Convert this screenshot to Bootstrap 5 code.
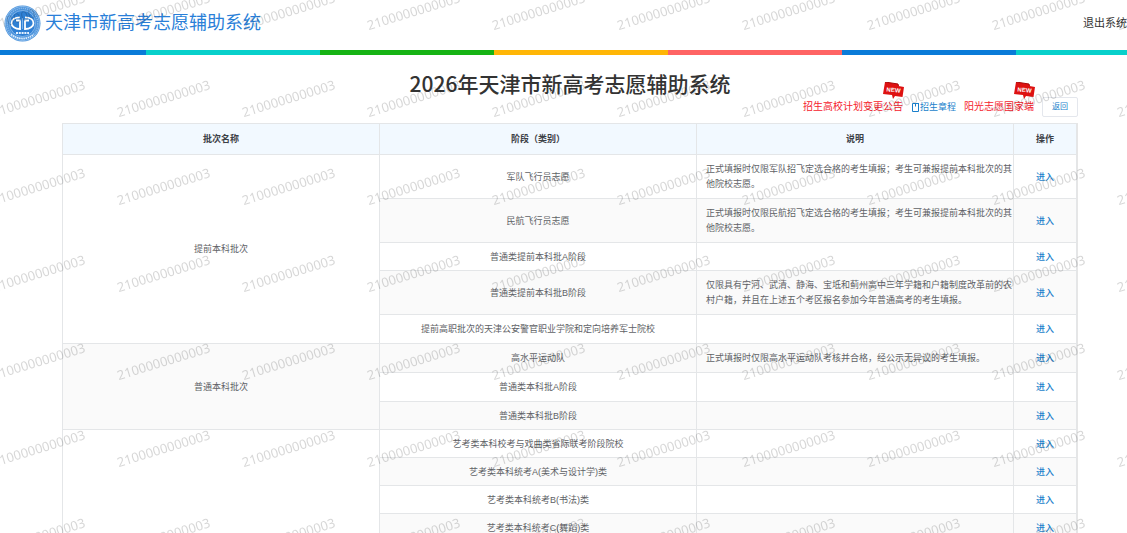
<!DOCTYPE html>
<html lang="zh-CN">
<head>
<meta charset="utf-8">
<meta name="viewport" content="width=device-width, initial-scale=1">
<title>天津市新高考志愿辅助系统</title>
<link href="https://cdn.jsdelivr.net/npm/bootstrap@5.3.0/dist/css/bootstrap.min.css" rel="stylesheet">
<style>
  body { font-family: "Liberation Sans", "Noto Sans CJK SC", sans-serif; font-size: 9px; line-height: 14px; color: #606266; background: #fff; }
  a { text-decoration: none; }
  .site-head { height: 50px; padding: 0 0 4px 4px; }
  .site-name { font-size: 18px; line-height: 24px; color: #2a7fd8; }
  .logout { font-size: 11px; color: #333; }
  .stripe { height: 5px; background: repeating-linear-gradient(90deg, #0a7bd8 0 174px, #08d0cb 174px 348px, #16b314 348px 522px, #ffb606 522px 696px, #ff6464 696px 870px) -28px 0 / 870px 5px repeat-x; }
  .content { padding: 14px 49px 0 62px; }
  .page-title { font: 500 21px/28px "Noto Sans CJK SC", sans-serif; color: #333; }
  .tools { gap: 8px; height: 20px; }
  .notice { font-size: 10px; color: #f5222d; }
  .new-flag { right: -2px; top: -18px; width: 22px; height: 18px; }
  .rules, .enter { color: #1a7fcb; }
  .enter { font-weight: 500; }
  .back { width: 36px; height: 20px; font-size: 8px; line-height: 16px; color: #1a7fcb; background: #fff; border: 1px solid #e4e7ed; border-radius: 2px; }
  .plan-wrap { margin-top: 6px; border-right: 1px solid #e6e6e6; }
  .plan { table-layout: fixed; --bs-table-color: #606266; --bs-table-bg: transparent; border-color: #e4e6e8; }
  .plan > :not(caption) > * > * { padding: 6px 2px; vertical-align: middle; }
  .plan thead th { background: #f2f9ff; color: #3c4046; height: 31px; }
  .plan tbody td { height: 28px; }
  .plan .one-line td { height: 29px; }
  .plan .two-line td { height: 44px; }
  .plan .shade { background: #fafafa; }
  .plan .desc { text-align: left; line-height: 15px; padding-left: 9px; padding-right: 0; }
  .col-op { width: 63px; }
  .watermark { font: 13px "Noto Sans", sans-serif; }
</style>
</head>
<body>
<div class="vh-100 overflow-hidden position-relative">
  <header class="site-head d-flex align-items-center justify-content-between">
    <div class="d-flex align-items-center gap-1">
      <svg width="37" height="37" viewBox="0 0 37 37" class="flex-shrink-0" aria-hidden="true">
        <circle cx="18.500" cy="18.500" r="18" fill="#4b93dc"/>
        <circle cx="18.500" cy="18.500" r="17" fill="none" stroke="#b4d5f5" stroke-width=".6"/>
        <circle cx="18.500" cy="18.500" r="15.200" fill="none" stroke="#8dbbe9" stroke-width="1.400" stroke-dasharray="1.200 .9"/>
        <circle cx="18.500" cy="18.500" r="13" fill="#2f80d4" stroke="#a9cdf2" stroke-width=".6"/>
        <path d="M16 12.400C10.500 12.400 7.500 15 7.500 18.200s3.500 5.800 8.500 5.800V15.500M21 12.400c5.500 0 8.500 2.600 8.500 5.800S26 24 21 24V15.500M12 15.500h4.500M20.500 15.500H25" fill="none" stroke="#fff" stroke-width="1.800"/>
        <path d="M18.500 13v11" stroke="#8fc0f2" stroke-width=".8"/>
        <path d="M12 28h13" stroke="#e6f2ff" stroke-width="1.800" stroke-dasharray="2 .8"/>
        <path d="M7 29.500q11.500 8 23 0" fill="none" stroke="#e0effd" stroke-width="1.800" stroke-dasharray="1.400 .8"/>
      </svg>
      <span class="site-name">天津市新高考志愿辅助系统</span>
    </div>
    <a href="#" class="logout">退出系统</a>
  </header>
  <div class="stripe"></div>

  <main class="content">
    <h1 class="page-title text-center mb-0">2026年天津市新高考志愿辅助系统</h1>
    <div class="tools d-flex align-items-center justify-content-end">
      <a href="#" class="notice position-relative">招生高校计划变更公告
        <svg class="new-flag position-absolute" viewBox="0 0 22 18" aria-hidden="true"><path d="M2 0l13 2 .5 2 5.500 1-1.500 10-7.500-1-2 3-1-4L0 12z" fill="#de1111"/><path d="M2 0l13 2 .5 2" fill="none" stroke="#a80808"/><text x="10.500" y="10" transform="rotate(5 10 8)" text-anchor="middle" font-size="6" font-weight="700" fill="#fff">NEW</text></svg>
      </a>
      <a href="#" class="rules d-flex align-items-center"><svg width="9" height="10" viewBox="0 0 9 10" fill="none" stroke="#1a7fcb" aria-hidden="true"><path d="M4 1.500H1.500v8h6v-8M4.500 1v3.500M4 1.500h4"/></svg>招生章程</a>
      <a href="#" class="notice position-relative">阳光志愿国家端
        <svg class="new-flag position-absolute" viewBox="0 0 22 18" aria-hidden="true"><path d="M2 0l13 2 .5 2 5.500 1-1.500 10-7.500-1-2 3-1-4L0 12z" fill="#de1111"/><path d="M2 0l13 2 .5 2" fill="none" stroke="#a80808"/><text x="10.500" y="10" transform="rotate(5 10 8)" text-anchor="middle" font-size="6" font-weight="700" fill="#fff">NEW</text></svg>
      </a>
      <button type="button" class="back p-0">返回</button>
    </div>

    <div class="plan-wrap">
      <table class="plan table table-bordered text-center mb-0">
        <colgroup><col><col><col><col class="col-op"></colgroup>
        <thead>
          <tr><th scope="col">批次名称</th><th scope="col">阶段（类别）</th><th scope="col">说明</th><th scope="col">操作</th></tr>
        </thead>
        <tbody>
          <tr class="two-line"><td rowspan="5">提前本科批次</td><td>军队飞行员志愿</td><td class="desc">正式填报时仅限军队招飞定选合格的考生填报；考生可兼报提前本科批次的其他院校志愿。</td><td><a href="#" class="enter">进入</a></td></tr>
          <tr class="two-line"><td class="shade">民航飞行员志愿</td><td class="desc shade">正式填报时仅限民航招飞定选合格的考生填报；考生可兼报提前本科批次的其他院校志愿。</td><td class="shade"><a href="#" class="enter">进入</a></td></tr>
          <tr><td>普通类提前本科批A阶段</td><td></td><td><a href="#" class="enter">进入</a></td></tr>
          <tr class="two-line"><td class="shade">普通类提前本科批B阶段</td><td class="desc shade">仅限具有宁河、武清、静海、宝坻和蓟州高中三年学籍和户籍制度改革前的农村户籍，并且在上述五个考区报名参加今年普通高考的考生填报。</td><td class="shade"><a href="#" class="enter">进入</a></td></tr>
          <tr class="one-line"><td>提前高职批次的天津公安警官职业学院和定向培养军士院校</td><td></td><td><a href="#" class="enter">进入</a></td></tr>
          <tr class="one-line"><td rowspan="3" class="shade">普通本科批次</td><td class="shade">高水平运动队</td><td class="desc shade">正式填报时仅限高水平运动队考核并合格，经公示无异议的考生填报。</td><td class="shade"><a href="#" class="enter">进入</a></td></tr>
          <tr class="one-line"><td>普通类本科批A阶段</td><td></td><td><a href="#" class="enter">进入</a></td></tr>
          <tr><td class="shade">普通类本科批B阶段</td><td class="shade"></td><td class="shade"><a href="#" class="enter">进入</a></td></tr>
          <tr><td rowspan="4"></td><td>艺考类本科校考与戏曲类省际联考阶段院校</td><td></td><td><a href="#" class="enter">进入</a></td></tr>
          <tr><td class="shade">艺考类本科统考A(美术与设计学)类</td><td class="shade"></td><td class="shade"><a href="#" class="enter">进入</a></td></tr>
          <tr><td>艺考类本科统考B(书法)类</td><td></td><td><a href="#" class="enter">进入</a></td></tr>
          <tr><td class="shade">艺考类本科统考C(舞蹈)类</td><td class="shade"></td><td class="shade"><a href="#" class="enter">进入</a></td></tr>
        </tbody>
      </table>
    </div>
  </main>

  <!-- account number watermark, repeated over the whole page -->
  <svg class="watermark position-absolute top-0 start-0 w-100 h-100 pe-none" aria-hidden="true">
    <defs>
      <pattern id="wm" x="-20" y="-25" width="125" height="175" patternUnits="userSpaceOnUse">
        <g fill="#000" fill-opacity=".16" text-anchor="middle">
          <text transform="translate(60 41) rotate(-17)">2100000000003</text>
          <text transform="translate(60 128) rotate(-17)">2100000000003</text>
        </g>
      </pattern>
    </defs>
    <rect width="100%" height="100%" fill="url(#wm)"/>
  </svg>
</div>
<script src="https://cdn.jsdelivr.net/npm/bootstrap@5.3.0/dist/js/bootstrap.bundle.min.js"></script>
</body>
</html>
